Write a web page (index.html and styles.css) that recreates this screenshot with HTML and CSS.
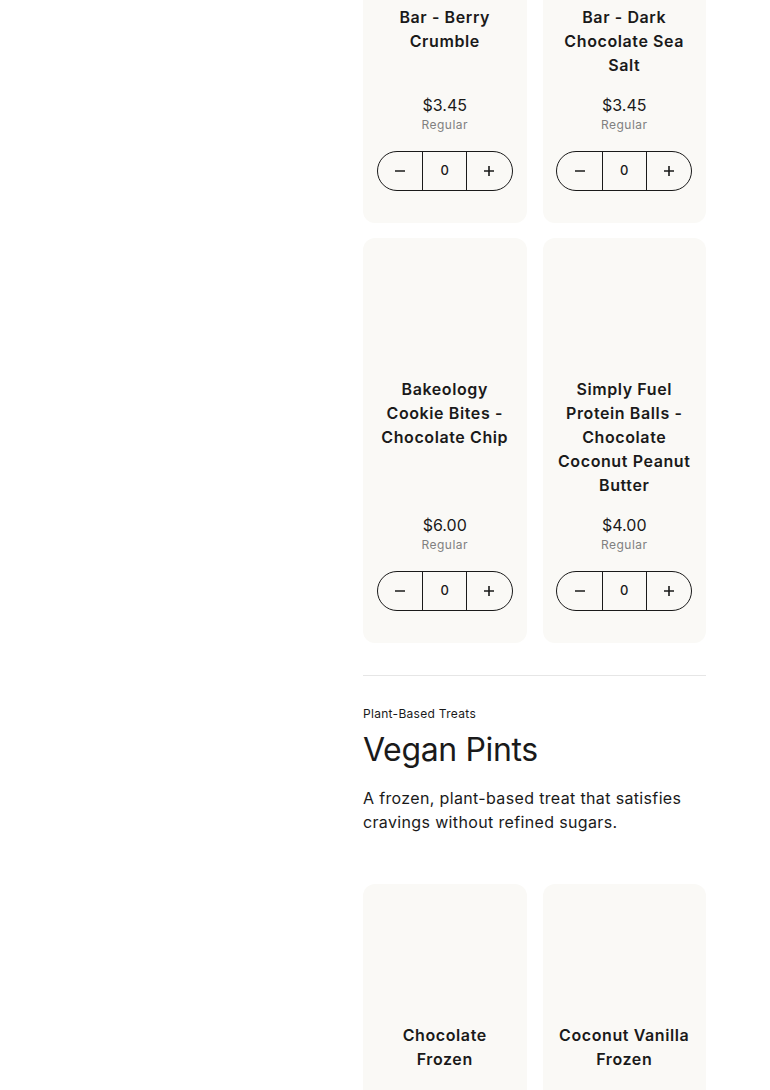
FILE: index.html
```html
<!DOCTYPE html>
<html lang="en">
<head>
<meta charset="utf-8">
<title>Menu</title>
<link rel="stylesheet" href="styles.css">
</head>
<body>
<div class="page">
  <aside class="sidebar"></aside>
  <main class="main">
    <div class="products">
      <article class="card">
        <div class="card-img"></div>
        <h3 class="card-title">Simply Fuel Protein Snack Bar - Berry Crumble</h3>
        <div class="card-bottom">
          <div class="price">$3.45</div>
          <div class="size">Regular</div>
          <div class="stepper">
            <button class="step-btn" aria-label="Decrease"><svg width="12" height="12" viewBox="0 0 12 12"><path d="M1 6h10" stroke="#1a1a1a" stroke-width="1.6"/></svg></button>
            <span class="qty">0</span>
            <button class="step-btn" aria-label="Increase"><svg width="12" height="12" viewBox="0 0 12 12"><path d="M1 6h10M6 1v10" stroke="#1a1a1a" stroke-width="1.6"/></svg></button>
          </div>
        </div>
      </article>
      <article class="card">
        <div class="card-img"></div>
        <h3 class="card-title">Simply Fuel Protein Snack Bar - Dark Chocolate Sea Salt</h3>
        <div class="card-bottom">
          <div class="price">$3.45</div>
          <div class="size">Regular</div>
          <div class="stepper">
            <button class="step-btn" aria-label="Decrease"><svg width="12" height="12" viewBox="0 0 12 12"><path d="M1 6h10" stroke="#1a1a1a" stroke-width="1.6"/></svg></button>
            <span class="qty">0</span>
            <button class="step-btn" aria-label="Increase"><svg width="12" height="12" viewBox="0 0 12 12"><path d="M1 6h10M6 1v10" stroke="#1a1a1a" stroke-width="1.6"/></svg></button>
          </div>
        </div>
      </article>
      <article class="card">
        <div class="card-img"></div>
        <h3 class="card-title">Bakeology Cookie Bites - Chocolate Chip</h3>
        <div class="card-bottom">
          <div class="price">$6.00</div>
          <div class="size">Regular</div>
          <div class="stepper">
            <button class="step-btn" aria-label="Decrease"><svg width="12" height="12" viewBox="0 0 12 12"><path d="M1 6h10" stroke="#1a1a1a" stroke-width="1.6"/></svg></button>
            <span class="qty">0</span>
            <button class="step-btn" aria-label="Increase"><svg width="12" height="12" viewBox="0 0 12 12"><path d="M1 6h10M6 1v10" stroke="#1a1a1a" stroke-width="1.6"/></svg></button>
          </div>
        </div>
      </article>
      <article class="card">
        <div class="card-img"></div>
        <h3 class="card-title">Simply Fuel Protein Balls - Chocolate Coconut Peanut Butter</h3>
        <div class="card-bottom">
          <div class="price">$4.00</div>
          <div class="size">Regular</div>
          <div class="stepper">
            <button class="step-btn" aria-label="Decrease"><svg width="12" height="12" viewBox="0 0 12 12"><path d="M1 6h10" stroke="#1a1a1a" stroke-width="1.6"/></svg></button>
            <span class="qty">0</span>
            <button class="step-btn" aria-label="Increase"><svg width="12" height="12" viewBox="0 0 12 12"><path d="M1 6h10M6 1v10" stroke="#1a1a1a" stroke-width="1.6"/></svg></button>
          </div>
        </div>
      </article>
    </div>

    <hr class="divider">

    <section class="section-head">
      <p class="eyebrow">Plant-Based Treats</p>
      <h2 class="section-title">Vegan Pints</h2>
      <p class="section-desc">A frozen, plant-based treat that satisfies cravings without refined sugars.</p>
    </section>

    <div class="products">
      <article class="card">
        <div class="card-img"></div>
        <h3 class="card-title">Chocolate Frozen</h3>
        <div class="card-bottom">
          <div class="price">$9.00</div>
          <div class="size">Pint</div>
          <div class="stepper">
            <button class="step-btn" aria-label="Decrease"><svg width="12" height="12" viewBox="0 0 12 12"><path d="M1 6h10" stroke="#1a1a1a" stroke-width="1.6"/></svg></button>
            <span class="qty">0</span>
            <button class="step-btn" aria-label="Increase"><svg width="12" height="12" viewBox="0 0 12 12"><path d="M1 6h10M6 1v10" stroke="#1a1a1a" stroke-width="1.6"/></svg></button>
          </div>
        </div>
      </article>
      <article class="card">
        <div class="card-img"></div>
        <h3 class="card-title">Coconut Vanilla Frozen</h3>
        <div class="card-bottom">
          <div class="price">$9.00</div>
          <div class="size">Pint</div>
          <div class="stepper">
            <button class="step-btn" aria-label="Decrease"><svg width="12" height="12" viewBox="0 0 12 12"><path d="M1 6h10" stroke="#1a1a1a" stroke-width="1.6"/></svg></button>
            <span class="qty">0</span>
            <button class="step-btn" aria-label="Increase"><svg width="12" height="12" viewBox="0 0 12 12"><path d="M1 6h10M6 1v10" stroke="#1a1a1a" stroke-width="1.6"/></svg></button>
          </div>
        </div>
      </article>
    </div>
  </main>
</div>
</body>
</html>
```

FILE: styles.css
```css
* {
  box-sizing: border-box;
}

html, body {
  margin: 0;
  padding: 0;
  background: #ffffff;
}

body {
  font-family: Inter, "Noto Sans", "Liberation Sans", sans-serif;
  color: #1a1a1a;
  overflow: hidden;
}

.page {
  display: grid;
  grid-template-columns: 363px 343px;
}

.main {
  margin-top: -182px;
  padding-bottom: 64px;
}

.products {
  display: grid;
  grid-template-columns: 1fr 1fr;
  column-gap: 16px;
  row-gap: 15px;
}

.card {
  background: #faf9f6;
  border-radius: 12px;
  padding: 16px 12px 32px;
  display: flex;
  flex-direction: column;
  align-items: center;
  text-align: center;
}

.card-img {
  width: 100%;
  height: 111px;
  margin-bottom: 12px;
}

.card-title {
  margin: 0;
  font-size: 16px;
  line-height: 24px;
  font-weight: 600;
  letter-spacing: 0.6px;
}

.card-bottom {
  margin-top: auto;
  padding-top: 16px;
  display: flex;
  flex-direction: column;
  align-items: center;
}

.price {
  font-size: 16px;
  line-height: 24px;
  font-weight: 400;
}

.size {
  font-size: 12px;
  line-height: 16px;
  color: #808080;
  letter-spacing: 0.5px;
}

.stepper {
  margin-top: 18px;
  width: 136px;
  height: 40px;
  border: 1px solid #1a1a1a;
  border-radius: 20px;
  display: grid;
  grid-template-columns: 1fr 1fr 1fr;
  overflow: hidden;
}

.step-btn {
  border: 0;
  background: transparent;
  padding: 0;
  margin: 0;
  display: flex;
  align-items: center;
  justify-content: center;
  cursor: pointer;
}

.qty {
  border-left: 1px solid #1a1a1a;
  border-right: 1px solid #1a1a1a;
  display: flex;
  align-items: center;
  justify-content: center;
  font-size: 13px;
  font-weight: 500;
  padding-bottom: 3px;
}

.divider {
  border: 0;
  border-top: 1px solid #e6e6e6;
  margin: 32px 0 0;
}

.section-head {
  padding-top: 30px;
  margin-bottom: 50px;
}

.eyebrow {
  margin: 0;
  font-size: 12px;
  line-height: 16px;
  letter-spacing: 0.3px;
}

.section-title {
  margin: 8px 0 0;
  font-size: 32px;
  line-height: 40px;
  font-weight: 400;
  letter-spacing: -0.35px;
}

.section-desc {
  margin: 16px 0 0;
  font-size: 16px;
  line-height: 24px;
  letter-spacing: 0.35px;
}
```
